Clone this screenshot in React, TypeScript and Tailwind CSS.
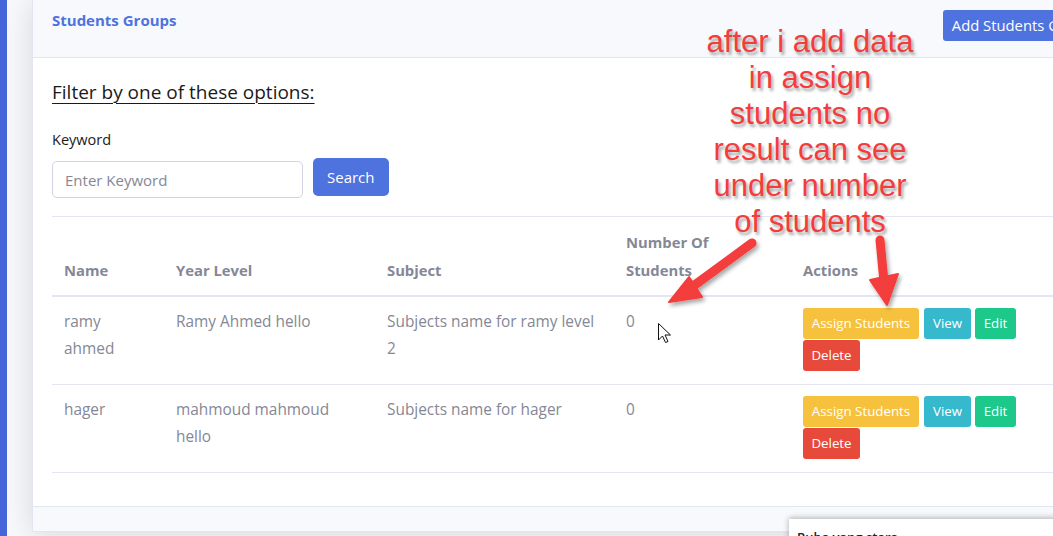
import React from 'react';

const rows = [
  { name: ['ramy', 'ahmed'], year: 'Ramy Ahmed hello', subject: 'Subjects name for ramy level 2', count: 0 },
  { name: ['hager'], year: 'mahmoud mahmoud hello', subject: 'Subjects name for hager', count: 0 },
];

const ActionButtons: React.FC = () => (
  <div className="flex flex-wrap w-[220px] text-[13.3px] leading-[21px] text-white">
    <button className="h-[31px] w-[116px] rounded-[3px] bg-[#f6c23e] mr-[5px]">Assign Students</button>
    <button className="h-[31px] w-[47px] rounded-[3px] bg-[#36b9cc] mr-[4px]">View</button>
    <button className="h-[31px] w-[41px] rounded-[3px] bg-[#1cc88a]">Edit</button>
    <button className="h-[31px] w-[57px] rounded-[3px] bg-[#e74a3b] mt-[1px]">Delete</button>
  </div>
);

export default function App() {
  return (
    <div className="relative w-[1053px] h-[536px] overflow-hidden bg-[#eceef4] font-['Open_Sans',sans-serif]">
      <div className="flex h-full">
        {/* sidebar edge */}
        <div className="w-[7px] shrink-0 bg-[#4466d8]" />

        {/* content */}
        <div className="flex-1 bg-[#f8f9fc] pl-[25px] overflow-hidden">
          <div className="w-[1170px] h-[532px] bg-white border border-[#e3e6f0] border-t-0 shadow-[0_0.15rem_1.75rem_0_rgba(58,59,69,0.18)] flex flex-col">
            {/* Header */}
            <div className="h-[58px] shrink-0 bg-[#f8f9fc] border-b border-[#e3e6f0] flex items-start justify-between px-[19px]">
              <div className="mt-[9px] text-[15px] font-bold text-[#4e73df]">Students Groups</div>
              <button className="mt-[10px] h-[31px] px-[9px] rounded-[3px] bg-[#4e73df] text-white text-[14.8px] mr-[81px]">
                Add Students Group
              </button>
            </div>

            {/* Body */}
            <div className="flex-1 px-[19px] pt-[19px]">
              <div className="text-[19px] leading-[30px] text-[#1a1a1a] underline underline-offset-[4px] decoration-1">
                Filter by one of these options:
              </div>
              <div className="mt-[21px] text-[14.5px] leading-[24px] text-[#1a1a1a]">Keyword</div>
              <div className="mt-[6px] flex items-start gap-[10px]">
                <input
                  placeholder="Enter Keyword"
                  className="mt-[3px] w-[251px] h-[37px] rounded-[5px] border border-[#d1d3e2] px-[12px] text-[15px] text-[#6e707e] placeholder:text-[#858796] outline-none"
                />
                <button className="h-[38px] px-[14px] rounded-[5px] bg-[#4e73df] text-white text-[15px]">Search</button>
              </div>
              <div className="mt-[18px] border-t border-[#e3e6f0]" />

              <table className="w-[1070px] table-fixed text-[15.4px] text-[#858796]">
                <colgroup>
                  <col className="w-[112px]" />
                  <col className="w-[211px]" />
                  <col className="w-[239px]" />
                  <col className="w-[177px]" />
                  <col />
                </colgroup>
                <thead>
                  <tr className="border-b-2 border-[#e3e6f0] text-left align-bottom leading-[28px] font-bold text-[14.8px]">
                    <th className="px-[12px] pt-[11px] pb-[11px]">Name</th>
                    <th className="px-[12px] pt-[11px] pb-[11px]">Year Level</th>
                    <th className="px-[12px] pt-[11px] pb-[11px]">Subject</th>
                    <th className="px-[12px] pt-[11px] pb-[11px]">Number Of<br />Students</th>
                    <th className="px-[12px] pt-[11px] pb-[11px]">Actions</th>
                  </tr>
                </thead>
                <tbody>
                  {rows.map((r, i) => (
                    <tr key={i} className="border-b border-[#e3e6f0] align-top leading-[27px]">
                      <td className="px-[12px] pt-[11px] pb-[12px]">
                        {r.name.map((n) => (
                          <div key={n}>{n}</div>
                        ))}
                      </td>
                      <td className="px-[12px] pt-[11px] pb-[12px]">{r.year}</td>
                      <td className="px-[12px] pt-[11px] pb-[12px]">{r.subject}</td>
                      <td className="px-[12px] pt-[11px] pb-[12px]">{r.count}</td>
                      <td className="px-[12px] pt-[11px] pb-[13px]">
                        <ActionButtons />
                      </td>
                    </tr>
                  ))}
                </tbody>
              </table>
            </div>

            {/* Footer */}
            <div className="h-[25px] shrink-0 bg-[#f8f9fc] border-t border-[#e3e6f0]" />
          </div>
        </div>
      </div>

      {/* annotation */}
      <div className="absolute left-[660px] top-[24px] w-[300px] text-center font-['Liberation_Sans',Arial,sans-serif] text-[31px] leading-[36px] text-[#f43c3c] [text-shadow:2px_3px_3px_rgba(0,0,0,0.35)] pointer-events-none">
        after i add data<br />in assign<br />students no<br />result can see<br />under number<br />of students
      </div>

      <svg className="absolute left-0 top-0 pointer-events-none" width="1053" height="536">
        <defs>
          <filter id="sh" x="-20%" y="-20%" width="140%" height="140%">
            <feDropShadow dx="2" dy="3" stdDeviation="2" floodColor="#000" floodOpacity="0.35" />
          </filter>
        </defs>
        <g filter="url(#sh)" fill="#f43c3c" stroke="#f43c3c">
          <line x1="752" y1="243" x2="692" y2="287" strokeWidth="9" strokeLinecap="round" />
          <polygon points="669,302 689,277 702,297" strokeWidth="2" strokeLinejoin="round" />
          <line x1="880" y1="240" x2="884" y2="282" strokeWidth="9" strokeLinecap="round" />
          <polygon points="887,305 870,280 898,274" strokeWidth="2" strokeLinejoin="round" />
        </g>
        {/* mouse pointer */}
        <path
          d="M658.5 323.5 L658.5 340 L662.5 336 L665.5 342.5 L668 341.5 L665 335 L670.5 335 Z"
          fill="#fff"
          stroke="#111"
          strokeWidth="1"
          strokeLinejoin="round"
        />
      </svg>

      {/* popup peeking at the bottom */}
      <div className="absolute left-[789px] top-[519px] w-[300px] h-[40px] bg-white shadow-[0_-1px_6px_rgba(0,0,0,0.3)] pl-[8px] pt-[9px] text-[13px] font-semibold text-[#222]">
        Ruba yang stara
      </div>
    </div>
  );
}
